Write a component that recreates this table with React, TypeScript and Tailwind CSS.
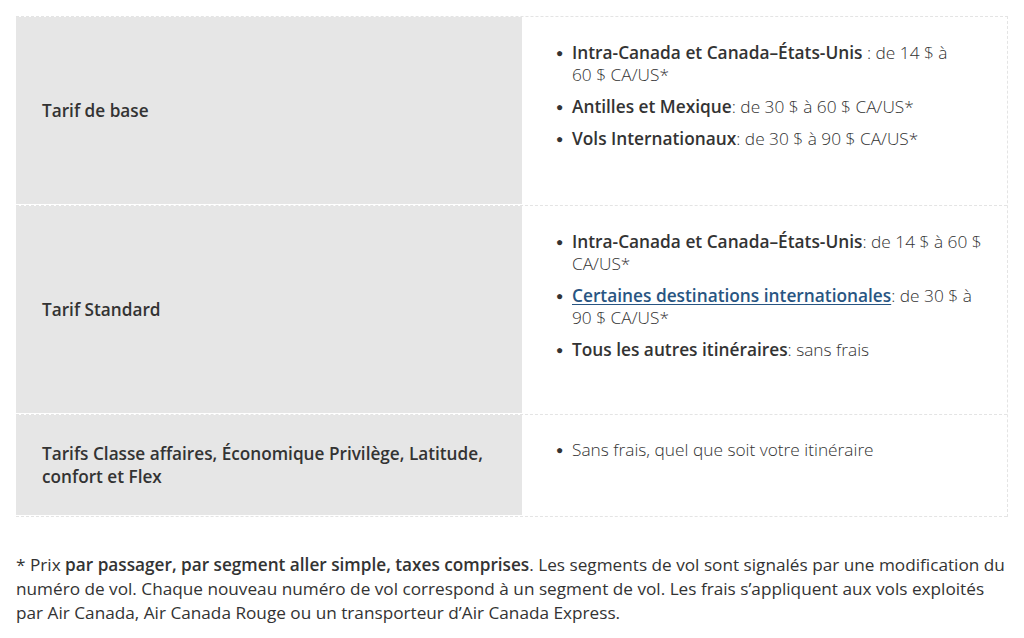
const rows = [
  {
    label: "Tarif de base",
    h: "h-[189px]",
    items: [
      <>
        <b className="font-semibold">Intra-Canada et Canada–États-Unis</b> : de 14&nbsp;$ à 60&nbsp;$ CA/US*
      </>,
      <>
        <b className="font-semibold">Antilles et Mexique</b>: de 30&nbsp;$ à 60&nbsp;$ CA/US*
      </>,
      <>
        <b className="font-semibold">Vols Internationaux</b>: de 30&nbsp;$ à 90&nbsp;$ CA/US*
      </>,
    ],
    top: "pt-[25px]",
  },
  {
    label: "Tarif Standard",
    h: "h-[209px]",
    items: [
      <>
        <b className="font-semibold">Intra-Canada et Canada–États-Unis</b>: de 14&nbsp;$ à 60&nbsp;$ CA/US*
      </>,
      <>
        <a href="#" className="font-semibold text-[#285582] underline underline-offset-2">
          Certaines destinations internationales
        </a>
        : de 30&nbsp;$ à 90&nbsp;$ CA/US*
      </>,
      <>
        <b className="font-semibold">Tous les autres itinéraires</b>: sans frais
      </>,
    ],
    top: "pt-[25px]",
  },
  {
    label: "Tarifs Classe affaires, Économique Privilège, Latitude, confort et Flex",
    h: "h-[102px]",
    items: [<>Sans frais, quel que soit votre itinéraire</>],
    top: "pt-[24px]",
  },
];

export default function App() {
  return (
    <div className="min-h-screen bg-white text-[#333] font-['Open_Sans',sans-serif]">
      <div className="pt-4 px-4">
        <div className="w-[992px] border-t border-r border-dashed border-[#e4e4e4]">
          {rows.map((r, i) => (
            <div key={i} className={`flex ${r.h} border-b border-dashed border-[#e4e4e4]`}>
              <div className="w-[506px] bg-[#e6e6e6] border-b border-white flex items-center pl-[26px] pr-6">
                <span className="text-[17.2px] font-semibold leading-[23px]">{r.label}</span>
              </div>
              <div className={`flex-1 ${r.top} pl-[34px] pr-[20px]`}>
                <ul className="flex flex-col gap-[10px]">
                  {r.items.map((it, j) => (
                    <li key={j} className="flex text-[17.3px] font-light leading-[22px]">
                      <span className="w-[16px] shrink-0 text-[12px] leading-[22px]">●</span>
                      <span className="w-[410px]">{it}</span>
                    </li>
                  ))}
                </ul>
              </div>
            </div>
          ))}
        </div>
        <p className="mt-[36px] w-[992px] text-[17.2px] leading-6">
          * Prix <b className="font-semibold">par passager, par segment aller simple, taxes comprises</b>. Les segments de vol sont signalés par une modification du numéro de vol. Chaque nouveau numéro de vol correspond à un segment de vol. Les frais s’appliquent aux vols exploités par Air Canada, Air Canada Rouge ou un transporteur d’Air Canada Express.
        </p>
      </div>
    </div>
  );
}
